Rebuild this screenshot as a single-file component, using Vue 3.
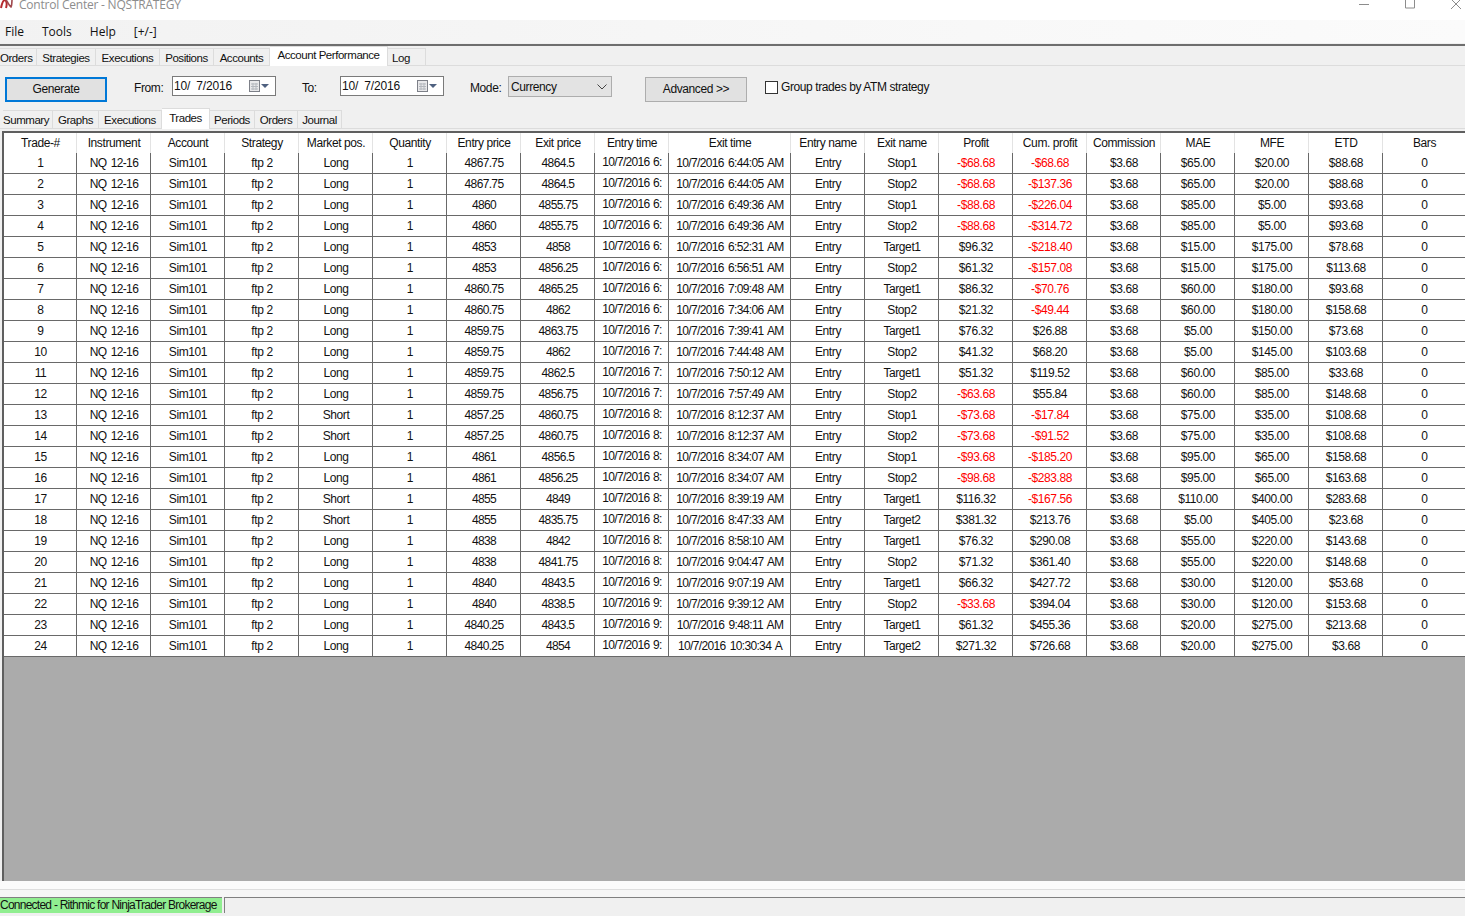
<template>
  <div class="window">
    <div class="titlebar">
      <svg class="logo" width="14" height="10" viewBox="0 0 14 10">
        <path d="M1 9 C2 4 3 1 5 1 C7 2 7 6 6 9" fill="none" stroke="#b5292e" stroke-width="2" />
        <path d="M6 1 C8 3 9 7 11 8 C12 6 12 3 12 0" fill="none" stroke="#a04a4e" stroke-width="1.6" />
      </svg>
      <span class="title-text">Control Center - NQSTRATEGY</span>
      <div class="win-controls">
        <svg width="12" height="10" viewBox="0 0 12 10"><path d="M1 4.5h10" stroke="#8c8c8c" fill="none" /></svg>
        <svg width="12" height="10" viewBox="0 0 12 10"><path d="M1.5 -3h9v11h-9z" stroke="#8c8c8c" fill="none" /></svg>
        <svg width="12" height="10" viewBox="0 0 12 10"><path d="M1 -1l10 10M11 -1l-10 10" stroke="#8c8c8c" fill="none" /></svg>
      </div>
    </div>

    <div class="menubar">
      <span v-for="m in menus" :key="m">{{ m }}</span>
    </div>

    <div class="tabs top-tabs">
      <div
        v-for="t in topTabs"
        :key="t.name"
        class="tab"
        :class="{ active: t.active }"
        :style="{ width: t.w + 'px' }"
      >{{ t.name }}</div>
    </div>

    <div class="toolbar">
      <button class="btn generate">Generate</button>
      <label class="lbl from">From:</label>
      <div class="date-box">
        <span>10/&nbsp; 7/2016</span>
        <svg width="26" height="14" viewBox="0 0 26 14">
          <rect x="1.5" y="1.5" width="10" height="11" fill="#e8e8ea" stroke="#7d8088" />
          <path d="M3 5h7M3 7.5h7M3 10h7M5 4v7M8 4v7" stroke="#b3b7bd" fill="none" />
          <path d="M13 5h8l-4 4z" fill="#4f6180" />
        </svg>
      </div>
      <label class="lbl to">To:</label>
      <div class="date-box">
        <span>10/&nbsp; 7/2016</span>
        <svg width="26" height="14" viewBox="0 0 26 14">
          <rect x="1.5" y="1.5" width="10" height="11" fill="#e8e8ea" stroke="#7d8088" />
          <path d="M3 5h7M3 7.5h7M3 10h7M5 4v7M8 4v7" stroke="#b3b7bd" fill="none" />
          <path d="M13 5h8l-4 4z" fill="#4f6180" />
        </svg>
      </div>
      <label class="lbl mode">Mode:</label>
      <div class="select-box">
        <span>Currency</span>
        <svg width="10" height="6" viewBox="0 0 10 6"><path d="M0.5 0.5l4.5 4.5l4.5 -4.5" fill="none" stroke="#444" /></svg>
      </div>
      <button class="btn advanced">Advanced &gt;&gt;</button>
      <span class="check"></span>
      <span class="check-label">Group trades by ATM strategy</span>
    </div>

    <div class="tabs sub-tabs">
      <div
        v-for="t in subTabs"
        :key="t.name"
        class="tab"
        :class="{ active: t.active }"
        :style="{ width: t.w + 'px' }"
      >{{ t.name }}</div>
    </div>

    <div class="grid-area">
      <div class="table">
        <div class="row head">
          <div v-for="h in headers" :key="h" class="cell">{{ h }}</div>
        </div>
        <div v-for="r in rows" :key="r.id" class="row">
          <div class="cell">{{ r.id }}</div>
          <div class="cell tight">NQ 12-16</div>
          <div class="cell">Sim101</div>
          <div class="cell">ftp 2</div>
          <div class="cell">{{ r.pos }}</div>
          <div class="cell">1</div>
          <div class="cell tight">{{ r.entry }}</div>
          <div class="cell tight">{{ r.exit }}</div>
          <div class="cell entry-time">10/7/2016 {{ r.hour }}:</div>
          <div class="cell tight">{{ r.time }}</div>
          <div class="cell">Entry</div>
          <div class="cell">{{ r.name }}</div>
          <div class="cell" :class="{ neg: r.profit.startsWith('-') }">{{ r.profit }}</div>
          <div class="cell" :class="{ neg: r.cum.startsWith('-') }">{{ r.cum }}</div>
          <div class="cell">$3.68</div>
          <div class="cell">{{ r.mae }}</div>
          <div class="cell">{{ r.mfe }}</div>
          <div class="cell">{{ r.etd }}</div>
          <div class="cell">0</div>
        </div>
      </div>
    </div>

    <div class="split"></div>
    <div class="statusbar">
      <div class="status-green">Connected - Rithmic for NinjaTrader Brokerage</div>
      <div class="status-empty"></div>
    </div>
  </div>
</template>

<script setup>
const menus = ['File', 'Tools', 'Help', '[+/-]']

const topTabs = [
  { name: 'Orders', w: 37 },
  { name: 'Strategies', w: 59 },
  { name: 'Executions', w: 64 },
  { name: 'Positions', w: 54 },
  { name: 'Accounts', w: 56 },
  { name: 'Account Performance', w: 118, active: true },
  { name: 'Log', w: 38 }
]

const subTabs = [
  { name: 'Summary', w: 50 },
  { name: 'Graphs', w: 46 },
  { name: 'Executions', w: 63 },
  { name: 'Trades', w: 48, active: true },
  { name: 'Periods', w: 45 },
  { name: 'Orders', w: 43 },
  { name: 'Journal', w: 44 }
]

const headers = [
  'Trade-#', 'Instrument', 'Account', 'Strategy', 'Market pos.', 'Quantity', 'Entry price',
  'Exit price', 'Entry time', 'Exit time', 'Entry name', 'Exit name', 'Profit', 'Cum. profit',
  'Commission', 'MAE', 'MFE', 'ETD', 'Bars'
]

// pos | entry | exit | entry hour | exit time | exit name | profit | cum | mae | mfe | etd
const raw = `Long|4867.75|4864.5|6|6:44:05 AM|Stop1|-$68.68|-$68.68|$65.00|$20.00|$88.68
Long|4867.75|4864.5|6|6:44:05 AM|Stop2|-$68.68|-$137.36|$65.00|$20.00|$88.68
Long|4860|4855.75|6|6:49:36 AM|Stop1|-$88.68|-$226.04|$85.00|$5.00|$93.68
Long|4860|4855.75|6|6:49:36 AM|Stop2|-$88.68|-$314.72|$85.00|$5.00|$93.68
Long|4853|4858|6|6:52:31 AM|Target1|$96.32|-$218.40|$15.00|$175.00|$78.68
Long|4853|4856.25|6|6:56:51 AM|Stop2|$61.32|-$157.08|$15.00|$175.00|$113.68
Long|4860.75|4865.25|6|7:09:48 AM|Target1|$86.32|-$70.76|$60.00|$180.00|$93.68
Long|4860.75|4862|6|7:34:06 AM|Stop2|$21.32|-$49.44|$60.00|$180.00|$158.68
Long|4859.75|4863.75|7|7:39:41 AM|Target1|$76.32|$26.88|$5.00|$150.00|$73.68
Long|4859.75|4862|7|7:44:48 AM|Stop2|$41.32|$68.20|$5.00|$145.00|$103.68
Long|4859.75|4862.5|7|7:50:12 AM|Target1|$51.32|$119.52|$60.00|$85.00|$33.68
Long|4859.75|4856.75|7|7:57:49 AM|Stop2|-$63.68|$55.84|$60.00|$85.00|$148.68
Short|4857.25|4860.75|8|8:12:37 AM|Stop1|-$73.68|-$17.84|$75.00|$35.00|$108.68
Short|4857.25|4860.75|8|8:12:37 AM|Stop2|-$73.68|-$91.52|$75.00|$35.00|$108.68
Long|4861|4856.5|8|8:34:07 AM|Stop1|-$93.68|-$185.20|$95.00|$65.00|$158.68
Long|4861|4856.25|8|8:34:07 AM|Stop2|-$98.68|-$283.88|$95.00|$65.00|$163.68
Short|4855|4849|8|8:39:19 AM|Target1|$116.32|-$167.56|$110.00|$400.00|$283.68
Short|4855|4835.75|8|8:47:33 AM|Target2|$381.32|$213.76|$5.00|$405.00|$23.68
Long|4838|4842|8|8:58:10 AM|Target1|$76.32|$290.08|$55.00|$220.00|$143.68
Long|4838|4841.75|8|9:04:47 AM|Stop2|$71.32|$361.40|$55.00|$220.00|$148.68
Long|4840|4843.5|9|9:07:19 AM|Target1|$66.32|$427.72|$30.00|$120.00|$53.68
Long|4840|4838.5|9|9:39:12 AM|Stop2|-$33.68|$394.04|$30.00|$120.00|$153.68
Long|4840.25|4843.5|9|9:48:11 AM|Target1|$61.32|$455.36|$20.00|$275.00|$213.68
Long|4840.25|4854|9|10:30:34 A|Target2|$271.32|$726.68|$20.00|$275.00|$3.68`

const rows = raw.split('\n').map((line, i) => {
  const [pos, entry, exit, hour, time, name, profit, cum, mae, mfe, etd] = line.split('|')
  return { id: i + 1, pos, entry, exit, hour, time: '10/7/2016 ' + time, name, profit, cum, mae, mfe, etd }
})
</script>

<style>
html, body {
  margin: 0;
  overflow: hidden;
}
</style>

<style scoped>
.window {
  width: 1465px;
  height: 916px;
  display: flex;
  flex-direction: column;
  overflow: hidden;
  background: #f0f0f0;
  color: #111;
  font-family: "Liberation Sans", Arial, sans-serif;
  font-size: 12px;
  letter-spacing: -0.4px;
}

.titlebar {
  height: 20px;
  flex: none;
  background: #fff;
  display: flex;
  align-items: flex-start;
  overflow: hidden;
}
.logo {
  margin: -1px 5px 0 0;
}
.title-text {
  font-family: "Open Sans", sans-serif;
  font-size: 12px;
  line-height: 10px;
  color: #8d8d8d;
  letter-spacing: -0.22px;
}
.win-controls {
  margin-left: auto;
  display: flex;
  gap: 34px;
  padding-right: 3px;
}

.menubar {
  height: 24px;
  flex: none;
  box-sizing: border-box;
  background: linear-gradient(to right, #f2f2f2, #fbfbfb);
  display: flex;
  align-items: center;
  gap: 18px;
  padding: 0 0 0 5px;
  font-family: "Open Sans", sans-serif;
  font-size: 12px;
  letter-spacing: 0;
  border-bottom: 1px solid #f0f0f0;
}

.tabs {
  display: flex;
  align-items: flex-end;
  flex: none;
  font-size: 11.5px;
  letter-spacing: -0.45px;
}
.top-tabs {
  height: 22px;
  box-sizing: border-box;
  border-top: 2px solid #6e6e6e;
  border-bottom: 1px solid #dcdcdc;
}
.sub-tabs {
  height: 21px;
  padding-left: 3px;
  border-bottom: 1px solid #dcdcdc;
  margin-top: -1px;
}
.tab {
  box-sizing: border-box;
  height: 18px;
  margin-bottom: 0;
  border: 1px solid #dcdcdc;
  border-left: none;
  border-bottom: none;
  text-align: center;
  line-height: 18px;
  white-space: nowrap;
  overflow: hidden;
}
.tab:first-child {
  padding-right: 4px;
}
.top-tabs .tab:last-child {
  text-align: left;
  padding-left: 4px;
}
.top-tabs .tab {
  height: 17px;
  line-height: 18px;
}
.top-tabs .tab.active {
  height: 20px;
  line-height: 17px;
}
.tab.active {
  height: 21px;
  background: #fff;
  line-height: 18px;
  margin-bottom: -1px;
  position: relative;
}

.toolbar {
  height: 42px;
  flex: none;
  display: flex;
  align-items: flex-start;
  padding-top: 10px;
  box-sizing: border-box;
}
.btn {
  box-sizing: border-box;
  height: 25px;
  width: 102px;
  margin-top: 1px;
  background: #e1e1e1;
  border: 1px solid #adadad;
  font: inherit;
  letter-spacing: inherit;
  color: #111;
  padding: 0 0 2px;
}
.generate {
  margin-left: 5px;
  border: 2px solid #0078d7;
}
.lbl {
  line-height: 24px;
}
.from {
  margin-left: 27px;
  width: 38px;
}
.to {
  margin-left: 26px;
  width: 38px;
}
.mode {
  margin-left: 26px;
  width: 38px;
}
.date-box {
  box-sizing: border-box;
  width: 104px;
  height: 20px;
  background: #fff;
  border: 1px solid #7a7a7a;
  display: flex;
  align-items: center;
  justify-content: space-between;
  padding-left: 1px;
  letter-spacing: -0.2px;
}
.date-box svg {
  margin-right: 1px;
}
.select-box {
  box-sizing: border-box;
  width: 104px;
  height: 21px;
  background: #e3e3e3;
  border: 1px solid #adadad;
  display: flex;
  align-items: center;
  justify-content: space-between;
  padding: 0 4px 0 2px;
}
.advanced {
  margin-left: 33px;
}
.check {
  box-sizing: border-box;
  width: 13px;
  height: 13px;
  margin: 5px 3px 0 18px;
  background: #fff;
  border: 1px solid #333;
}
.check-label {
  line-height: 22px;
}

.grid-area {
  flex: 1;
  min-height: 0;
  margin-top: 2px;
  background: #ababab;
  border-top: 2px solid #5f5f5f;
  border-left: 2px solid #5f5f5f;
  margin-left: 2px;
  overflow: hidden;
}
.table {
  width: 1461px;
  background: #fff;
}
.row {
  display: grid;
  grid-template-columns: 73px repeat(8, 74px) 122px repeat(8, 74px) 1fr;
  height: 21px;
  box-sizing: border-box;
  border-bottom: 1px solid #696969;
}
.row.head {
  height: 20px;
  border-bottom: none;
}
.cell {
  border-right: 1px solid #696969;
  padding-left: 1px;
  text-align: center;
  line-height: 20px;
  white-space: nowrap;
  overflow: hidden;
}
.cell:last-child {
  border-right: none;
}
.head .cell {
  border-right-color: #e3e3e3;
}
.tight {
  letter-spacing: -0.65px;
  word-spacing: 1.5px;
}
.entry-time {
  line-height: 18px;
  letter-spacing: -0.7px;
  word-spacing: 1px;
}
.neg {
  color: #ff0000;
}

.split {
  height: 16px;
  flex: none;
  background: linear-gradient(to bottom, #fbfbfb 0 8px, #dedede 8px 9px, #f6f6f6 9px);
}
.statusbar {
  height: 19px;
  flex: none;
  display: flex;
  align-items: flex-start;
  gap: 2px;
}
.status-green {
  box-sizing: border-box;
  width: 222px;
  height: 16px;
  background: #90ee90;
  border-top: 1px solid #808080;
  line-height: 15px;
  letter-spacing: -0.75px;
  white-space: nowrap;
  overflow: hidden;
}
.status-empty {
  box-sizing: border-box;
  flex: 1;
  height: 16px;
  border-top: 1px solid #808080;
  border-left: 1px solid #808080;
  background: #f0f0f0;
}
</style>
